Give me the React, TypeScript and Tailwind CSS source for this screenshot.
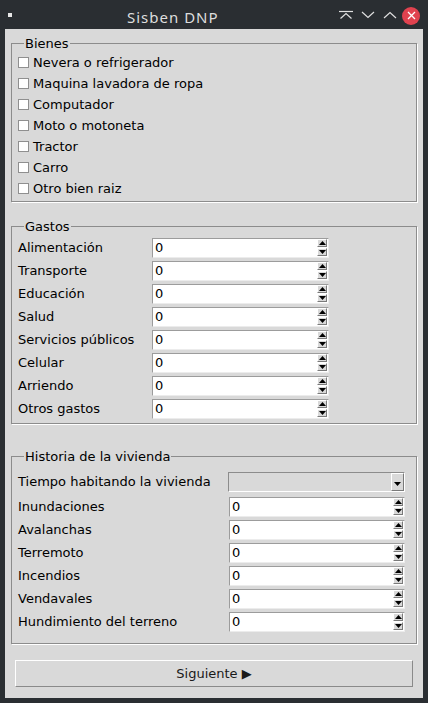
import React from "react";

const bienes = [
  "Nevera o refrigerador",
  "Maquina lavadora de ropa",
  "Computador",
  "Moto o motoneta",
  "Tractor",
  "Carro",
  "Otro bien raiz",
];

const gastos = [
  "Alimentación",
  "Transporte",
  "Educación",
  "Salud",
  "Servicios públicos",
  "Celular",
  "Arriendo",
  "Otros gastos",
];

const riesgos = [
  "Inundaciones",
  "Avalanchas",
  "Terremoto",
  "Incendios",
  "Vendavales",
  "Hundimiento del terreno",
];

function Arrow({ up }: { up?: boolean }) {
  return (
    <div className="w-[10px] h-[8px] bg-[#d9d9d9] border-t border-l border-t-white border-l-white border-b border-r border-b-[#7a7a7a] border-r-[#7a7a7a] flex items-center justify-center">
      <svg width="7" height="4" viewBox="0 0 7 4">
        {up ? <path d="M0 4 L3.5 0 L7 4 Z" fill="#000" /> : <path d="M0 0 L3.5 4 L7 0 Z" fill="#000" />}
      </svg>
    </div>
  );
}

function SpinBox({ width }: { width: string }) {
  return (
    <div className={`${width} h-[20px] bg-white border-t border-l border-[#9c9c9c] border-b border-r border-b-[#ececec] border-r-[#ececec] flex items-center justify-between`}>
      <span className="pl-[2px] leading-none">0</span>
      <div className="flex flex-col gap-[1px] mr-[1px]">
        <Arrow up />
        <Arrow />
      </div>
    </div>
  );
}

function Group({ title, className, children }: { title: string; className: string; children: React.ReactNode }) {
  return (
    <fieldset className={`mx-[6px] border border-[#8c8c8c] shadow-[1px_1px_0_#ffffff] m-0 min-w-0 ${className}`}>
      <legend className="ml-[6px] px-[1px] leading-[15px] p-0">{title}</legend>
      {children}
    </fieldset>
  );
}

export default function App() {
  return (
    <div
      className="w-[428px] h-[703px] bg-[#2a2e32] text-[13px] text-black overflow-hidden"
      style={{ fontFamily: '"DejaVu Sans", sans-serif' }}
    >
      {/* title bar */}
      <div className="h-[29px] flex items-center relative">
        <div className="ml-[8px] w-[4px] h-[4px] bg-[#e6e6e6]" />
        <div
          className="absolute left-[127px] top-[6px] text-[15px] tracking-[1px] text-[#dedede]"
          style={{ fontFamily: '"Noto Sans", sans-serif' }}
        >
          Sisben DNP
        </div>
        <div className="ml-auto flex items-center">
          <svg width="14" height="10" viewBox="0 0 14 10" className="mr-[8px]">
            <path d="M0 1.5 H14" stroke="#e0e0e0" strokeWidth="1.2" />
            <path d="M1.5 8.5 L7 3.5 L12.5 8.5" stroke="#e0e0e0" strokeWidth="1.2" fill="none" />
          </svg>
          <svg width="14" height="8" viewBox="0 0 14 8" className="mr-[8px]">
            <path d="M1 1 L7 6.5 L13 1" stroke="#e0e0e0" strokeWidth="1.2" fill="none" />
          </svg>
          <svg width="14" height="8" viewBox="0 0 14 8" className="mr-[5px]">
            <path d="M1 7 L7 1.5 L13 7" stroke="#e0e0e0" strokeWidth="1.2" fill="none" />
          </svg>
          <div className="w-[18px] h-[18px] rounded-full bg-[#e0424f] flex items-center justify-center mr-[8px] mt-[2px]">
            <svg width="9" height="9" viewBox="0 0 9 9">
              <path d="M1 1 L8 8 M8 1 L1 8" stroke="#ffffff" strokeWidth="1.3" />
            </svg>
          </div>
        </div>
      </div>

      {/* client area */}
      <div className="mx-[5px] h-[669px] bg-[#d9d9d9] flex flex-col">
        <Group title="Bienes" className="mt-[7px] pt-[1px] pb-[2px] pl-[6px]">
          {bienes.map((b) => (
            <div key={b} className="h-[21px] flex items-center">
              <div className="w-[11px] h-[11px] bg-white border border-[#8f8f8f]" />
              <span className="ml-[4px]">{b}</span>
            </div>
          ))}
        </Group>

        <Group title="Gastos" className="mt-[17px] pt-[2px] pb-[3px] pl-[6px]">
          {gastos.map((g) => (
            <div key={g} className="h-[23px] flex items-center">
              <span className="w-[134px]">{g}</span>
              <SpinBox width="w-[177px]" />
            </div>
          ))}
        </Group>

        <Group title="Historia de la vivienda" className="mt-[25px] pt-[4px] pb-[10px] pl-[6px]">
          <div className="h-[27px] flex items-center">
            <span className="w-[210px]">Tiempo habitando la vivienda</span>
            <div className="w-[177px] h-[20px] bg-[#d9d9d9] border-t border-l border-[#8c8c8c] border-b border-r border-b-white border-r-white flex justify-end">
              <div className="w-[13px] h-[18px] border-t border-l border-t-white border-l-white border-b border-r border-b-[#7a7a7a] border-r-[#7a7a7a] flex items-end justify-center pb-[4px]">
                <svg width="7" height="4" viewBox="0 0 7 4">
                  <path d="M0 0 L3.5 4 L7 0 Z" fill="#000" />
                </svg>
              </div>
            </div>
          </div>
          {riesgos.map((r) => (
            <div key={r} className="h-[23px] flex items-center">
              <span className="w-[211px]">{r}</span>
              <SpinBox width="w-[176px]" />
            </div>
          ))}
        </Group>

        <button className="mt-[16px] mx-[10px] h-[27px] bg-[#d9d9d9] border-t border-l border-t-white border-l-white border-b border-r border-b-[#8a8a8a] border-r-[#8a8a8a] text-[13px] text-[#1a1a1a]">
          Siguiente ▶
        </button>
      </div>
    </div>
  );
}
